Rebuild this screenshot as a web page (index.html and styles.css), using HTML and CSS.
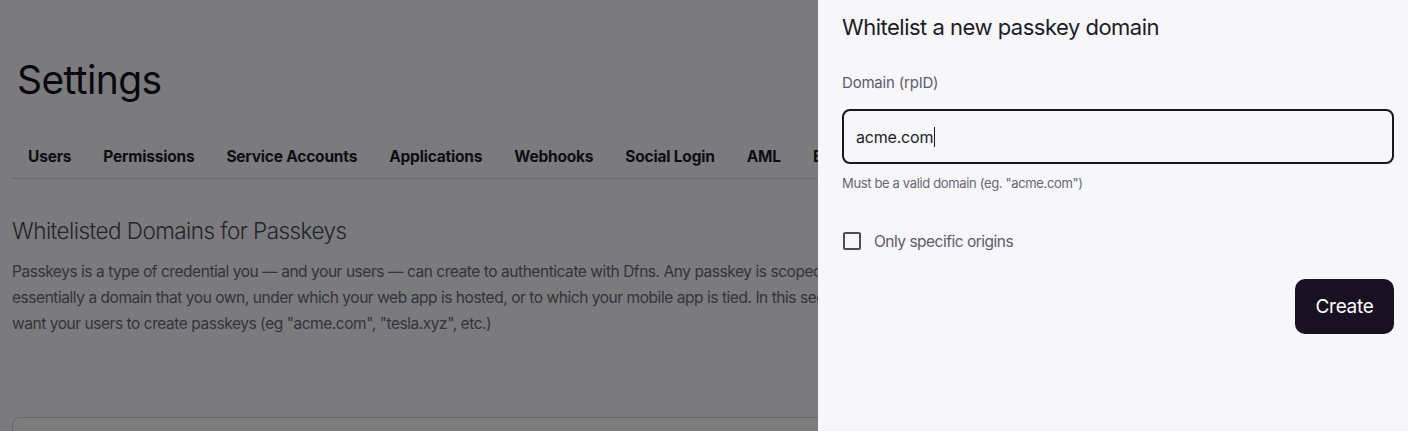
FILE: index.html
```html
<!DOCTYPE html>
<html>
<head>
<meta charset="utf-8">
<link rel="stylesheet" href="styles.css">
</head>
<body>
<div class="page">
  <h1 class="page-title">Settings</h1>
  <nav class="tabs">
    <span class="tab">Users</span>
    <span class="tab">Permissions</span>
    <span class="tab">Service Accounts</span>
    <span class="tab">Applications</span>
    <span class="tab">Webhooks</span>
    <span class="tab">Social Login</span>
    <span class="tab">AML</span>
    <span class="tab">Billing</span>
    <span class="tab">Passkeys</span>
  </nav>
  <h2 class="section-title">Whitelisted Domains for Passkeys</h2>
  <p class="section-text">Passkeys is a type of credential you — and your users — can create to authenticate with Dfns. Any passkey is scoped to a specific domain, the "Relying Party ID" (rpID), which is<br>essentially a domain that you own, under which your web app is hosted, or to which your mobile app is tied. In this section, you can whitelist the domains on which you<br>want your users to create passkeys (eg "acme.com", "tesla.xyz", etc.)</p>
  <div class="card"></div>
</div>
<div class="backdrop"></div>
<aside class="drawer">
  <h3 class="drawer-title">Whitelist a new passkey domain</h3>
  <label class="field-label">Domain (rpID)</label>
  <div class="input"><span>acme.com</span><span class="caret"></span></div>
  <div class="hint">Must be a valid domain (eg. "acme.com")</div>
  <div class="check-row"><span class="checkbox"></span><span class="check-label">Only specific origins</span></div>
  <div class="actions"><button class="btn">Create</button></div>
</aside>
</body>
</html>
```
FILE: styles.css
```css
* { box-sizing: border-box; }
html, body { margin: 0; padding: 0; }
body {
  width: 1408px;
  height: 431px;
  overflow: hidden;
  font-family: Inter, "Liberation Sans", sans-serif;
  background: #f6f6fa;
  position: relative;
}
.page {
  padding: 0 12px;
  white-space: nowrap;
  height: 431px;
  overflow: hidden;
}
.page-title {
  margin: 0;
  padding: 56px 0 0 5px;
  font-size: 39px;
  line-height: 48px;
  font-weight: 400;
  color: #111018;
  letter-spacing: -0.6px;
}
.tabs {
  display: flex;
  margin-top: 30px;
  border-bottom: 1px solid #d4d4da;
  height: 45px;
  align-items: center;
}
.tab {
  padding: 0 16px;
  font-size: 15.5px;
  font-weight: 700;
  color: #1c1a26;
  letter-spacing: -0.2px;
}
.section-title {
  margin: 38px 0 0;
  font-size: 22.5px;
  line-height: 28px;
  font-weight: 300;
  color: #4a4856;
  letter-spacing: -0.55px;
}
.section-text {
  margin: 14px 0 0;
  font-size: 15.5px;
  line-height: 26px;
  color: #6a6878;
  letter-spacing: -0.45px;
}
.card {
  margin-top: 80px;
  height: 40px;
  border: 1px solid #d0d0d6;
  border-radius: 8px;
  background: #fafafc;
}
.backdrop {
  position: absolute;
  inset: 0;
  background: rgba(0, 0, 0, 0.5);
}
.drawer {
  position: absolute;
  top: 0;
  right: 0;
  bottom: 0;
  width: 590px;
  background: #f7f7fa;
  padding: 12px 14px 0 24px;
  display: flex;
  flex-direction: column;
}
.drawer-title {
  margin: 0;
  font-size: 22px;
  line-height: 30px;
  font-weight: 400;
  color: #1d1b26;
  letter-spacing: -0.5px;
}
.field-label {
  margin-top: 30px;
  font-size: 15px;
  line-height: 22px;
  color: #5f5a6e;
  letter-spacing: -0.2px;
}
.input {
  margin-top: 15px;
  height: 55px;
  border: 2px solid #1a1424;
  border-radius: 8px;
  display: flex;
  align-items: center;
  padding: 0 12px;
  font-size: 16px;
  color: #1d1b26;
  background: #f7f7fa;
  letter-spacing: -0.2px;
}
.caret {
  display: inline-block;
  width: 1px;
  height: 20px;
  background: #1d1b26;
  margin-left: 1px;
}
.hint {
  margin-top: 11px;
  font-size: 13px;
  line-height: 16px;
  color: #6a6674;
  letter-spacing: -0.35px;
}
.check-row {
  margin-top: 40px;
  display: flex;
  align-items: center;
  gap: 13px;
  height: 20px;
}
.checkbox {
  width: 18px;
  height: 18px;
  border: 2px solid #4e4a5a;
  border-radius: 2px;
  margin-left: 1px;
}
.check-label {
  font-size: 15.5px;
  color: #5f5a6e;
  letter-spacing: -0.5px;
}
.actions {
  margin-top: 28px;
  display: flex;
  justify-content: flex-end;
}
.btn {
  height: 55px;
  width: 99px;
  border: none;
  border-radius: 10px;
  background: #1a1024;
  color: #ffffff;
  font-family: Inter, "Liberation Sans", sans-serif;
  font-size: 19px;
  letter-spacing: -0.3px;
  cursor: pointer;
}
```
